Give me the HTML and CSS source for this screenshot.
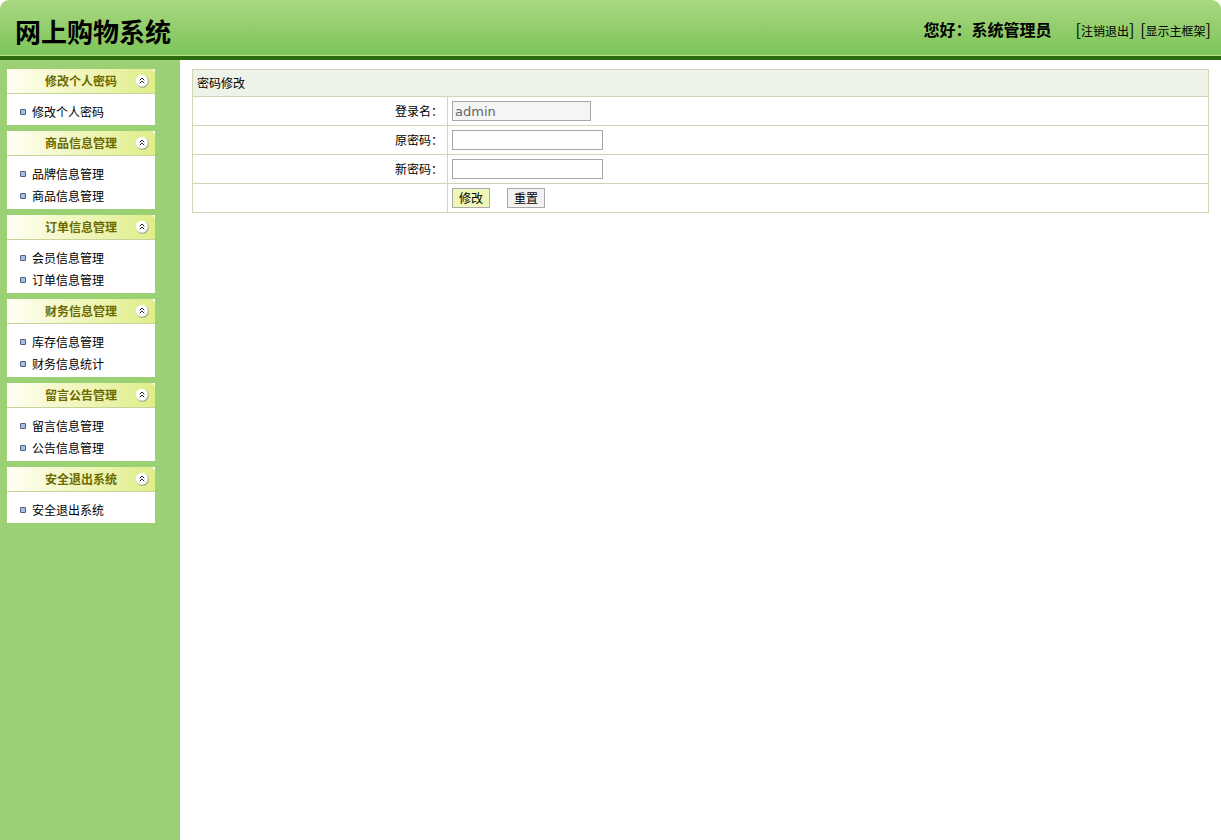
FILE: index.html
```html
<!DOCTYPE html>
<html lang="zh-CN">
<head>
<meta charset="utf-8">
<title>网上购物系统</title>
<link rel="stylesheet" href="styles.css">
</head>
<body>
<svg class="defs" width="0" height="0" aria-hidden="true">
  <symbol id="collapse" viewBox="0 0 14 14">
    <circle cx="7.500" cy="7.500" r="6.300" fill="#a3a88f"/>
    <circle cx="6.800" cy="6.800" r="6" fill="#fff"/>
    <path d="M4.700 6.300 7 4l2.300 2.300M4.700 9.300 7 7l2.300 2.300" fill="none" stroke="#222" stroke-width="1"/>
  </symbol>
</svg>
<header class="top">
  <h1 class="brand">网上购物系统</h1>
  <div class="user">
    <span class="hello">您好：系统管理员</span>
    <span class="links"><span class="br">[</span><a href="#">注销退出</a><span class="br">]</span> <span class="br sp">[</span><a href="#">显示主框架</a><span class="br">]</span></span>
  </div>
</header>
<div class="shell">
  <aside class="side">
    <section class="group">
      <div class="group-head"><span>修改个人密码</span><svg class="tog"><use href="#collapse"/></svg></div>
      <ul class="items"><li>修改个人密码</li></ul>
    </section>
    <section class="group">
      <div class="group-head"><span>商品信息管理</span><svg class="tog"><use href="#collapse"/></svg></div>
      <ul class="items"><li>品牌信息管理</li><li>商品信息管理</li></ul>
    </section>
    <section class="group">
      <div class="group-head"><span>订单信息管理</span><svg class="tog"><use href="#collapse"/></svg></div>
      <ul class="items"><li>会员信息管理</li><li>订单信息管理</li></ul>
    </section>
    <section class="group">
      <div class="group-head"><span>财务信息管理</span><svg class="tog"><use href="#collapse"/></svg></div>
      <ul class="items"><li>库存信息管理</li><li>财务信息统计</li></ul>
    </section>
    <section class="group">
      <div class="group-head"><span>留言公告管理</span><svg class="tog"><use href="#collapse"/></svg></div>
      <ul class="items"><li>留言信息管理</li><li>公告信息管理</li></ul>
    </section>
    <section class="group">
      <div class="group-head"><span>安全退出系统</span><svg class="tog"><use href="#collapse"/></svg></div>
      <ul class="items"><li>安全退出系统</li></ul>
    </section>
  </aside>
  <main class="main">
    <table class="form">
      <colgroup><col class="col-label"><col></colgroup>
      <tr class="title"><td colspan="2">密码修改</td></tr>
      <tr><td class="label">登录名：</td><td class="field"><input class="inp ro" value="admin" readonly></td></tr>
      <tr><td class="label">原密码：</td><td class="field"><input class="inp" type="password"></td></tr>
      <tr><td class="label">新密码：</td><td class="field"><input class="inp" type="password"></td></tr>
      <tr><td class="label"></td><td class="field"><button class="btn ok" type="button">修改</button><button class="btn" type="button">重置</button></td></tr>
    </table>
  </main>
</div>
</body>
</html>
```
FILE: styles.css
```css
* { box-sizing: border-box; }
html, body { margin: 0; padding: 0; height: 100%; }
body {
  background: #fff;
  color: #000;
  font-family: "Noto Sans CJK SC", "Liberation Sans", sans-serif;
  font-size: 12px;
  overflow: hidden;
}
.defs { position: absolute; }
.top {
  height: 60px;
  display: flex;
  align-items: flex-start;
  justify-content: space-between;
  padding: 0 10px 0 15px;
  background: linear-gradient(#aad880 0, #7cc45a 55px, #b4e58c 55px, #b4e58c 56px, #286a0c 56px);
  border-radius: 9px 9px 0 0;
}
.brand {
  margin: 12px 0 0;
  font-size: 26px;
  line-height: 38px;
  font-weight: 700;
}
.user { display: flex; align-items: center; height: 60px; }
.hello {
  font-size: 16px;
  font-weight: 700;
  line-height: 24px;
  margin: 0 24px 2px 0;
}
.links { font-size: 12px; line-height: 24px; white-space: nowrap; }
.links a { color: #000; text-decoration: none; }
.br { font-size: 16px; }
.sp { margin-left: 3px; }
.shell { display: flex; height: 780px; }
.side {
  width: 180px;
  flex: none;
  background: #9bd174;
  padding: 9px 25px 0 7px;
}
.group { margin-bottom: 6px; background: #fff; }
.group-head {
  height: 25px;
  position: relative;
  display: flex;
  justify-content: center;
  align-items: center;
  padding-bottom: 2px;
  font-size: 12px;
  font-weight: 700;
  color: #6a6a00;
  background: linear-gradient(90deg, #fffff6 0, #f5f8cc 35%, #dfee88 100%);
  border-bottom: 1px solid #c5d59a;
  border-radius: 5px 5px 0 0;
}
.tog { position: absolute; right: 6px; top: 5px; width: 14px; height: 14px; }
.items { list-style: none; margin: 0; padding: 7px 0 2px; }
.items li {
  height: 22px;
  line-height: 22px;
  padding-left: 25px;
  position: relative;
}
.items li::before {
  content: "";
  box-sizing: border-box;
  position: absolute;
  left: 13px;
  top: 8px;
  width: 6px;
  height: 6px;
  background: #a9bfe6;
  border: 1px solid #4a5a80;
  border-radius: 1px;
}
.main { flex: 1; padding: 9px 12px 0; background: #fff; }
.form { width: 100%; border-collapse: collapse; table-layout: fixed; }
.col-label { width: 255px; }
.form td { border: 1px solid #d0d5b6; height: 29px; padding: 0 4px; }
.form .title td { background: #eef3e9; height: 27px; padding-bottom: 2px; }
.form .label { text-align: right; padding: 0 4px 2px; }
.inp {
  display: block;
  width: 151px;
  height: 20px;
  padding: 0 2px;
  border: 1px solid #a6a6a6;
  background: #fff;
  font-size: 13px;
  font-family: "DejaVu Sans", sans-serif;
  outline: none;
}
.ro { width: 139px; background: #f5f5f5; color: #666; }
.btn {
  width: 38px;
  height: 20px;
  padding: 0 0 2px;
  margin-right: 17px;
  border: 1px solid #aaa;
  background: #f2f2f2;
  color: #000;
  font-size: 12px;
  font-family: inherit;
  vertical-align: middle;
}
.ok { background: #eef7b8; }
```
